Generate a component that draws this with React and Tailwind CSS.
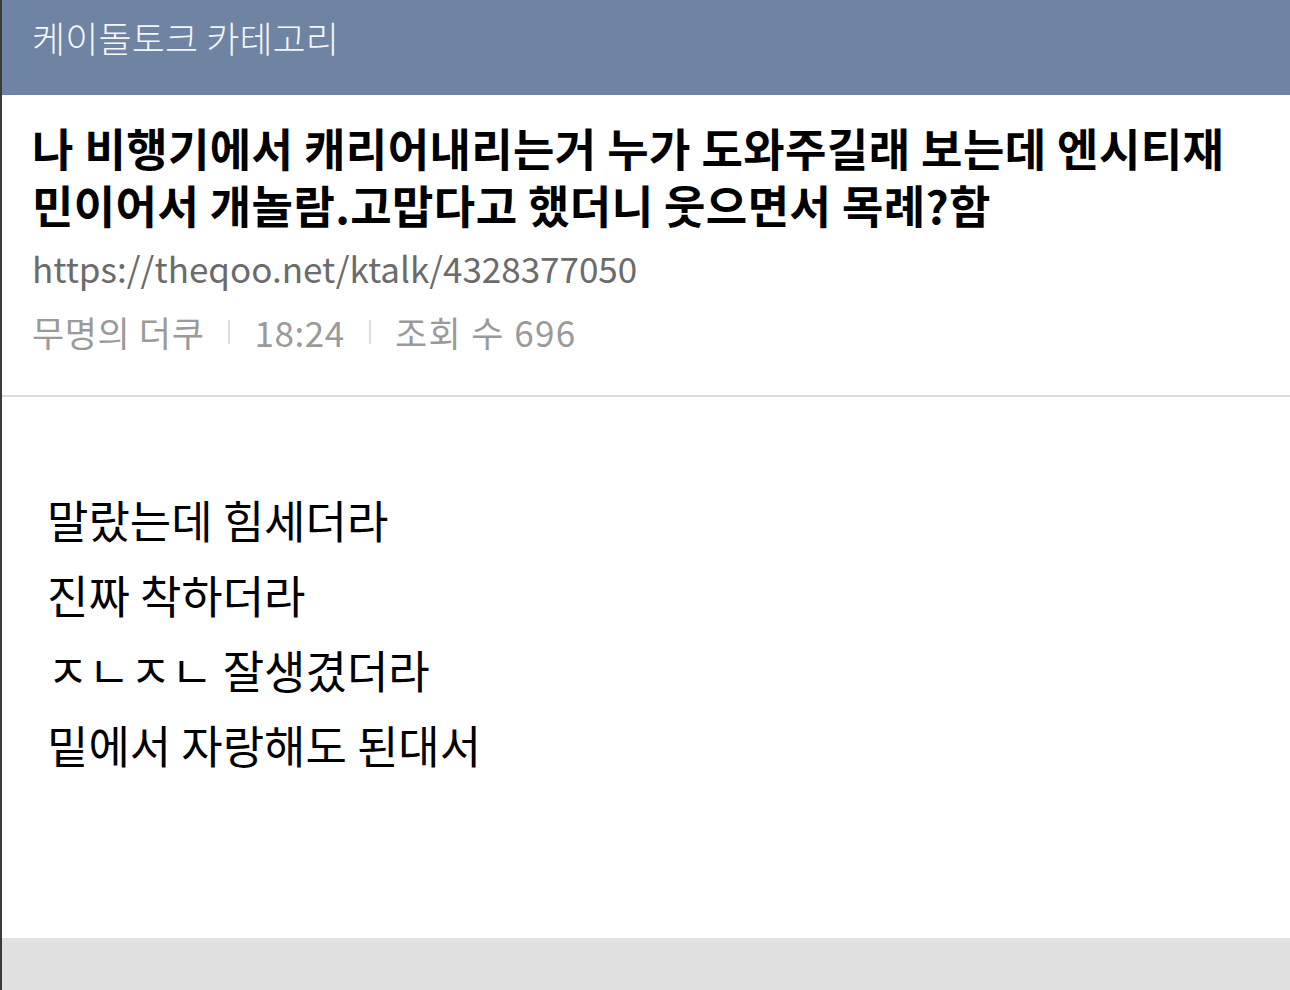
import React from "react";

const font = { fontFamily: '"Noto Sans CJK KR", "Noto Sans", sans-serif' };

const lines = ["말랐는데 힘세더라", "진짜 착하더라", "ㅈㄴㅈㄴ 잘생겼더라", "밑에서 자랑해도 된대서"];

export default function App() {
  return (
    <div
      className="flex h-[990px] w-[1290px] flex-col overflow-hidden border-l-2 border-[#3a3a3a] bg-white"
      style={font}
    >
      <header className="h-[95px] shrink-0 bg-[#6e84a2] pl-[30px] pt-[12px]">
        <h1 className="text-[36px] leading-[50px] font-light tracking-[0.1px] text-[#f4f6f9]">
          케이돌토크 카테고리
        </h1>
      </header>

      <section className="shrink-0 px-[30px] pt-[24px] pb-[38px]">
        <h2 className="text-[45px] leading-[57px] font-bold tracking-[0.4px] text-black">
          나 비행기에서 캐리어내리는거 누가 도와주길래 보는데 엔시티재
          <br />
          민이어서 개놀람.고맙다고 했더니 웃으면서 목례?함
        </h2>
        <p className="mt-[10px] text-[35px] leading-[50px] text-[#6b6b6b]">
          https://theqoo.net/ktalk/4328377050
        </p>
        <div className="mt-[14px] flex items-center text-[35px] leading-[50px] tracking-[0.6px] text-[#9a9a9a]">
          <span>무명의 더쿠</span>
          <span className="mx-[24px] h-[24px] w-[2px] bg-[#dddddd]" />
          <span>18:24</span>
          <span className="mx-[24px] h-[24px] w-[2px] bg-[#dddddd]" />
          <span className="tracking-[1.4px]">조회 수 696</span>
        </div>
      </section>

      <div className="h-[2px] shrink-0 bg-[#dcdcdc]" />

      <main className="flex-1 px-[45px] pt-[85px]">
        {lines.map((line) => (
          <p key={line} className="text-[45px] leading-[75px] text-black">
            {line}
          </p>
        ))}
      </main>

      <footer className="h-[52px] shrink-0 bg-[#e1e1e1]" />
    </div>
  );
}
